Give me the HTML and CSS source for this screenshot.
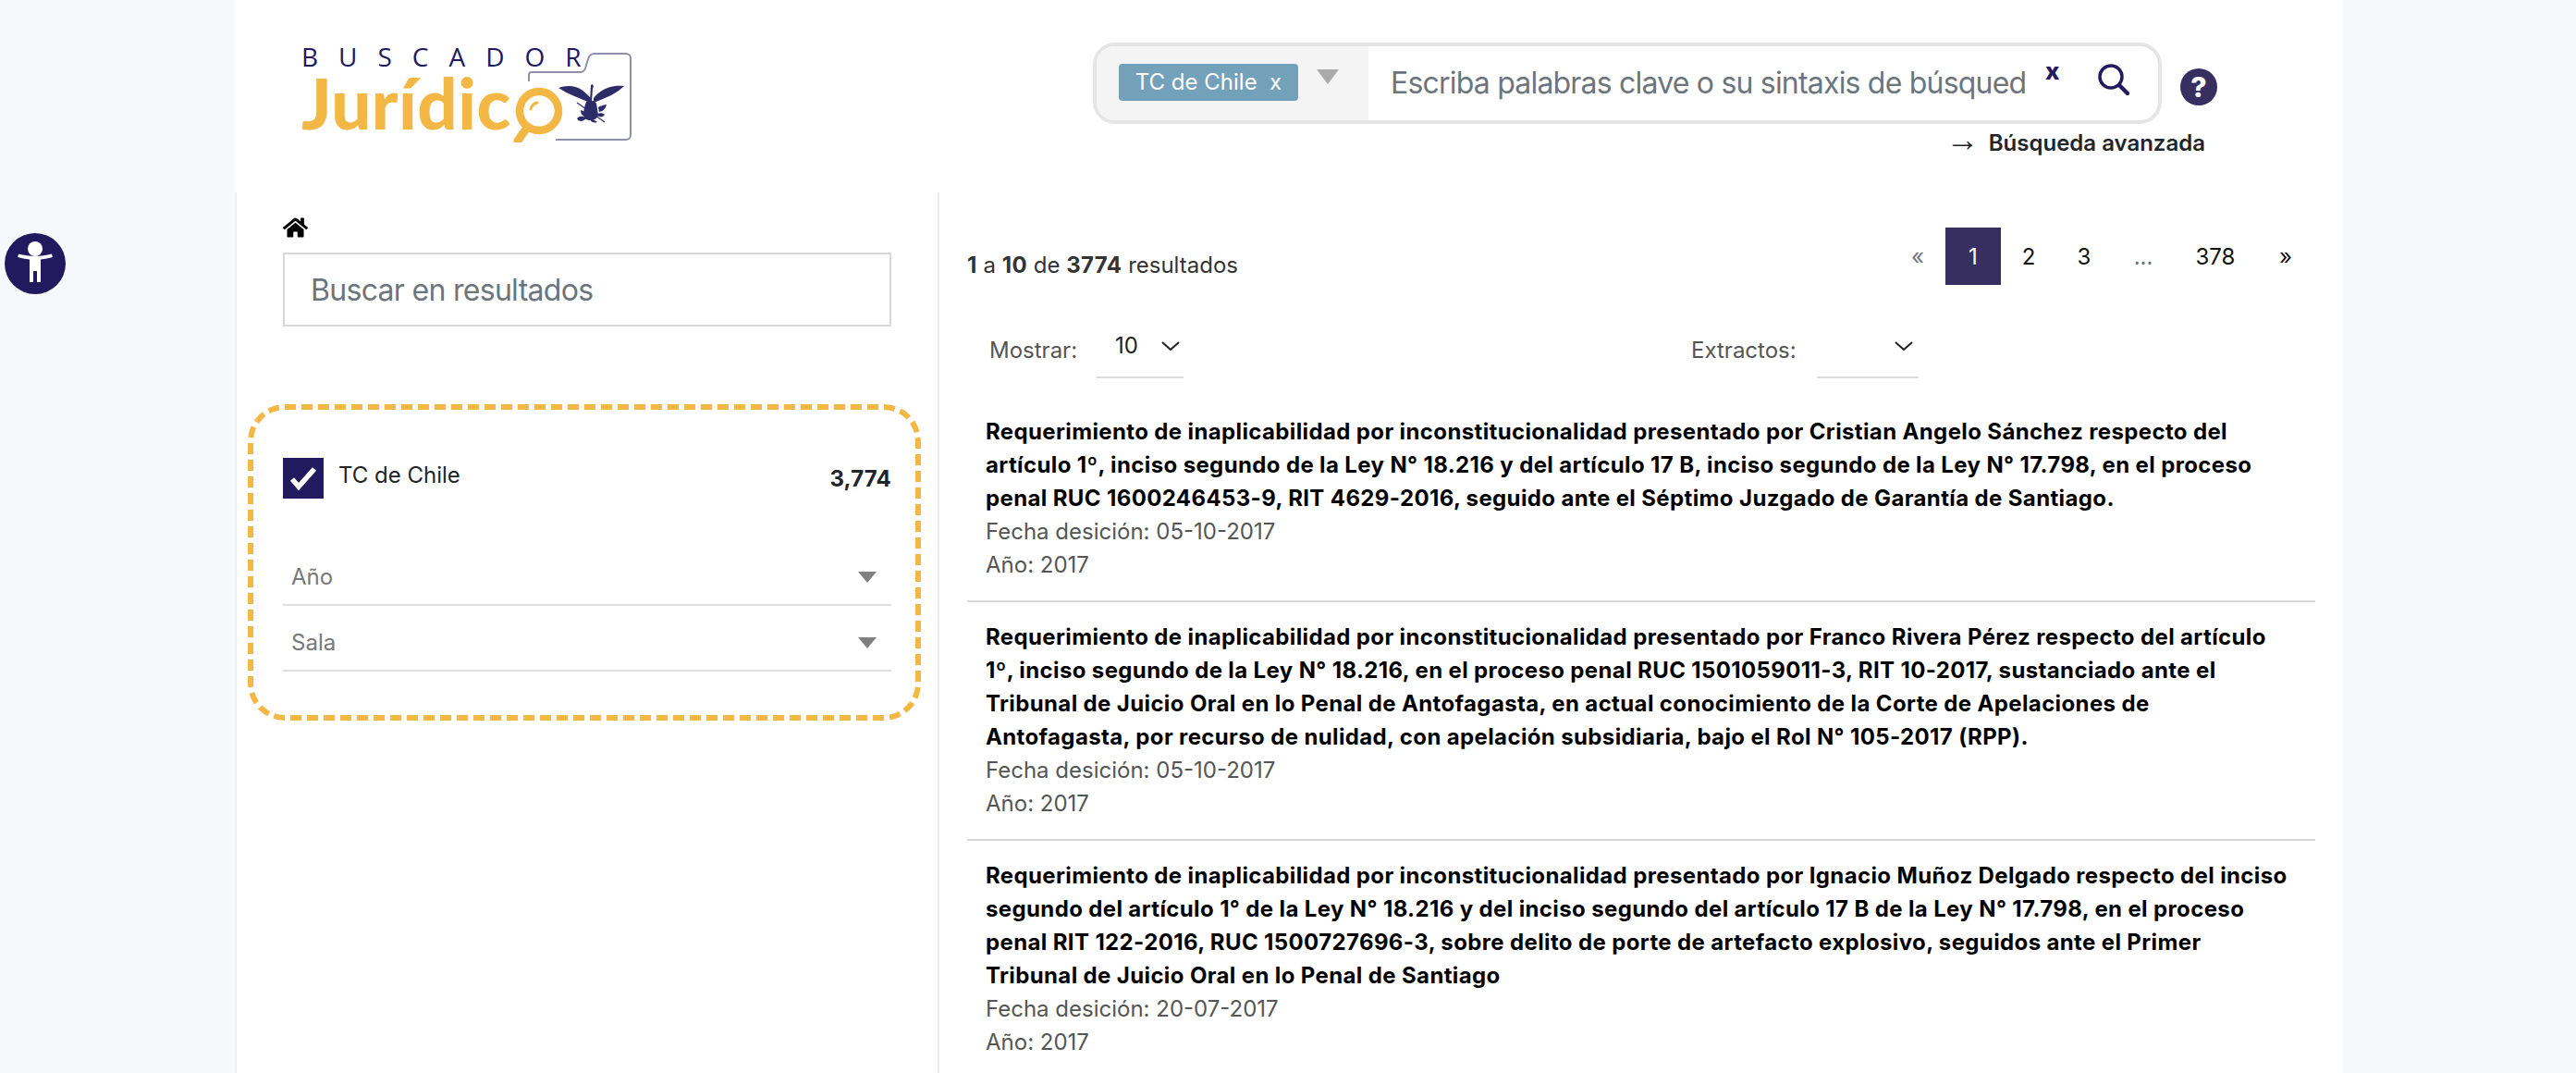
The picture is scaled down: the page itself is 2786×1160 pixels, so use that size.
FILE: index.html
```html
<!DOCTYPE html>
<html lang="es">
<head>
<meta charset="utf-8">
<title>Buscador Jurídico</title>
<link rel="stylesheet" href="styles.css">
</head>
<body>
<button class="a11y" aria-label="Accesibilidad">
  <svg viewBox="0 0 66 66" width="66" height="66"><circle cx="33" cy="33" r="33" fill="#221a5f"/><circle cx="33" cy="17" r="8" fill="#fff"/><path d="M15 22.500c6 1.500 12 2.500 18 2.500s12-1 18-2.500l.8 3.500c-4 1.200-8 2-12.800 2.500V53h-4V41h-4v12h-4V28.500c-4.800-.5-8.800-1.300-12.800-2.500z" fill="#fff"/></svg>
</button>
<div class="page">
  <header class="header">
    <a class="logo">
      <span class="logo-top">BUSCADOR</span>
      <span class="logo-main">Jurídic</span>
      <svg class="logo-art" viewBox="0 0 362 104" width="362" height="104">
        <path d="M246 38V31a3 3 0 0 1 3-3h52c3 0 5-1 6-4l3-10c1-4 3-6 7-6h34a5 5 0 0 1 5 5v83a5 5 0 0 1-5 5h-76" fill="none" stroke="#8f8fa9" stroke-width="2"/>
        <circle cx="257" cy="70" r="21" fill="#fff" stroke="#f3b745" stroke-width="8.500"/>
        <path d="M244 88l-10 14" stroke="#f3b745" stroke-width="9" stroke-linecap="round"/>
        <path d="M248 68c1-4 3-6 7-7" fill="none" stroke="#f3b745" stroke-width="3" stroke-linecap="round"/>
        <g fill="#2d2b68">
          <path d="M278 45C286 42 296 42 303 47 307 50 310 53 313 56L312 61C306 58 299 56 293 53 288 51 283 48 278 45z"/>
          <path d="M349 43C342 42 332 43 325 48 321 51 318 53 316 56L316 61C323 58 329 56 335 53 340 50 345 47 349 43z"/>
          <path d="M313 42l2-1 1 3-1 1-1 15h-2z"/>
          <path d="M308 60C312 58 317 58 319 62L321 74C320 80 312 82 306 78 304 72 306 66 308 60z"/>
          <path d="M298 78C302 74 306 76 308 78 304 82 300 82 298 78z"/>
          <path d="M302 69c4 1 6 3 6 7-4 0-6-3-6-7z"/>
          <path d="M321 66c3-2 5-2 9-3-1 4-3 7-8 8z"/>
          <path d="M320 73c3-1 6-1 8 1-2 3-5 3-8 1z"/>
          <path d="M312 79c3 0 6 1 8 3-3 1-6 1-8-3z"/>
        </g>
        <path d="M298 61L328 82" stroke="#2d2b68" stroke-width="1.200"/>
      </svg>
    </a>
    <div class="search-col">
      <div class="search-row">
        <div class="search-box">
          <div class="search-filter">
            <span class="tag">TC de Chile&nbsp; x</span>
            <span class="tri tri-light"></span>
          </div>
          <div class="search-input">Escriba palabras clave o su sintaxis de búsqueda</div>
          <span class="search-clear">x</span>
          <svg class="search-icon" viewBox="0 0 34 34" width="34" height="34"><circle cx="14" cy="14" r="12" fill="none" stroke="#221a5f" stroke-width="3.500"/><path d="M23 23l9 9" stroke="#221a5f" stroke-width="4.500" stroke-linecap="round"/></svg>
        </div>
        <span class="help">?</span>
      </div>
      <a class="advanced"><span class="arrow">→</span>Búsqueda avanzada</a>
    </div>
  </header>
  <div class="content">
    <aside class="sidebar">
      <svg class="home" viewBox="0 0 576 512" width="27" height="24"><path d="M280.370 148.260L96 300.110V464a16 16 0 0 0 16 16l112.060-.29a16 16 0 0 0 15.920-16V368a16 16 0 0 1 16-16h64a16 16 0 0 1 16 16v95.640a16 16 0 0 0 16 16.050L464 480a16 16 0 0 0 16-16V300L295.670 148.260a12.190 12.190 0 0 0-15.300 0zM571.600 251.470L488 182.560V44.050a12 12 0 0 0-12-12h-56a12 12 0 0 0-12 12v72.610L318.470 43a48 48 0 0 0-61 0L4.340 251.470a12 12 0 0 0-1.600 16.900l25.500 31A12 12 0 0 0 45.150 301l235.220-193.740a12.190 12.190 0 0 1 15.300 0L530.900 301a12 12 0 0 0 16.900-1.600l25.500-31a12 12 0 0 0-1.700-16.930z"/></svg>
      <div class="side-search">Buscar en resultados</div>
      <div class="filters">
        <div class="filter-check">
          <span class="checkbox"><svg viewBox="0 0 44 44" width="44" height="44"><path d="M10 23l7 8 17-19" fill="none" stroke="#fff" stroke-width="5.500"/></svg></span>
          <span class="filter-label">TC de Chile</span>
          <strong class="filter-count">3,774</strong>
        </div>
        <div class="filter-select"><span>Año</span><span class="tri tri-dark"></span></div>
        <div class="filter-select"><span>Sala</span><span class="tri tri-dark"></span></div>
      </div>
    </aside>
    <main class="main">
      <div class="top-row">
        <div class="count"><b>1</b> a <b>10</b> de <b>3774</b> resultados</div>
        <nav class="pager">
          <span class="pg pg-prev">«</span>
          <span class="pg active">1</span>
          <span class="pg">2</span>
          <span class="pg">3</span>
          <span class="pg pg-dots">...</span>
          <span class="pg pg-wide">378</span>
          <span class="pg pg-next">»</span>
        </nav>
      </div>
      <div class="controls">
        <div class="control control-show">
          <span class="control-label">Mostrar:</span>
          <span class="select select-show">10<svg class="chev" viewBox="0 0 20 10" width="20" height="10"><path d="M1 1l9 8 9-8" fill="none" stroke="#222" stroke-width="2"/></svg></span>
        </div>
        <div class="control control-ext">
          <span class="control-label">Extractos:</span>
          <span class="select select-ext"><svg class="chev" viewBox="0 0 20 10" width="20" height="10"><path d="M1 1l9 8 9-8" fill="none" stroke="#222" stroke-width="2"/></svg></span>
        </div>
      </div>
      <article class="result">
        <h2>Requerimiento de inaplicabilidad por inconstitucionalidad presentado por Cristian Angelo Sánchez respecto del artículo 1º, inciso segundo de la Ley N° 18.216 y del artículo 17 B, inciso segundo de la Ley N° 17.798, en el proceso penal RUC 1600246453-9, RIT 4629-2016, seguido ante el Séptimo Juzgado de Garantía de Santiago.</h2>
        <p>Fecha desición: 05-10-2017</p>
        <p>Año: 2017</p>
      </article>
      <article class="result">
        <h2>Requerimiento de inaplicabilidad por inconstitucionalidad presentado por Franco Rivera Pérez respecto del artículo 1º, inciso segundo de la Ley N° 18.216, en el proceso penal RUC 1501059011-3, RIT 10-2017, sustanciado ante el Tribunal de Juicio Oral en lo Penal de Antofagasta, en actual conocimiento de la Corte de Apelaciones de Antofagasta, por recurso de nulidad, con apelación subsidiaria, bajo el Rol N° 105-2017 (RPP).</h2>
        <p>Fecha desición: 05-10-2017</p>
        <p>Año: 2017</p>
      </article>
      <article class="result">
        <h2>Requerimiento de inaplicabilidad por inconstitucionalidad presentado por Ignacio Muñoz Delgado respecto del inciso segundo del artículo 1° de la Ley N° 18.216 y del inciso segundo del artículo 17 B de la Ley N° 17.798, en el proceso penal RIT 122-2016, RUC 1500727696-3, sobre delito de porte de artefacto explosivo, seguidos ante el Primer Tribunal de Juicio Oral en lo Penal de Santiago</h2>
        <p>Fecha desición: 20-07-2017</p>
        <p>Año: 2017</p>
      </article>
    </main>
  </div>
</div>
</body>
</html>
```
FILE: styles.css
```css
* { box-sizing: border-box; }
html, body { margin: 0; height: 100%; }
body {
  background: #f7f8fc;
  font-family: Inter, "Liberation Sans", sans-serif;
  font-size: 24px;
  line-height: 36px;
  color: #212529;
  overflow: hidden;
}
.a11y {
  position: fixed;
  left: 5px;
  top: 252px;
  width: 66px;
  height: 66px;
  padding: 0;
  border: 0;
  background: none;
  line-height: 0;
}
.page {
  width: 2280px;
  min-height: 1160px;
  margin-left: 254px;
  background: #fff;
}
.header {
  display: flex;
  height: 208px;
  padding-left: 72px;
}
.logo {
  position: relative;
  display: flex;
  flex-direction: column;
  width: 362px;
  height: 156px;
  margin-top: 47px;
  flex: none;
}
.logo-top {
  font-family: "Open Sans", sans-serif;
  font-size: 28px;
  line-height: 28px;
  letter-spacing: 22px;
  color: #221a5f;
}
.logo-main {
  font-family: Lato, sans-serif;
  font-weight: 900;
  font-size: 76px;
  line-height: 72px;
  letter-spacing: 0.5px;
  color: #f3b745;
}
.logo-art {
  position: absolute;
  left: 0;
  top: 3px;
}
.search-col {
  display: flex;
  flex-direction: column;
  margin-left: 494px;
  margin-top: 46px;
}
.search-row {
  display: flex;
  align-items: center;
  gap: 20px;
}
.search-box {
  display: flex;
  align-items: center;
  width: 1156px;
  height: 88px;
  border: 4px solid #e5e5e5;
  border-radius: 24px;
  overflow: hidden;
  background: #fff;
}
.search-filter {
  display: flex;
  gap: 20px;
  width: 294px;
  height: 100%;
  padding: 19px 0 0 24px;
  background: #f4f4f4;
  flex: none;
}
.tag {
  display: block;
  height: 40px;
  width: 194px;
  text-align: center;
  line-height: 40px;
  background: #74a1ba;
  border-radius: 4px;
  color: #fff;
  white-space: nowrap;
}
.tri {
  display: block;
  width: 0;
  height: 0;
  border-style: solid;
  border-color: transparent;
  border-bottom-width: 0;
}
.tri-light {
  margin-top: 6px;
  border-width: 16px 12px 0;
  border-top-color: #aaa;
}
.tri-dark {
  border-width: 12px 10px 0;
  border-top-color: #808080;
}
.search-input {
  width: 688px;
  margin-left: 24px;
  overflow: hidden;
  white-space: nowrap;
  font-size: 32px;
  letter-spacing: -0.8px;
  line-height: 48px;
  color: #6c757d;
  flex: none;
}
.search-clear {
  margin: -26px 0 0 20px;
  font-weight: 800;
  font-size: 26px;
  line-height: 30px;
  color: #221a5f;
  flex: none;
}
.search-icon {
  margin: -8px 0 0 42px;
  flex: none;
}
.help {
  width: 40px;
  height: 40px;
  margin-top: 8px;
  border-radius: 50%;
  background: #372f60;
  color: #fff;
  font-weight: 800;
  font-size: 30px;
  line-height: 40px;
  text-align: center;
}
.advanced {
  align-self: flex-end;
  margin: 3px 13px 0 0;
  font-weight: 600;
  color: #212529;
}
.arrow {
  margin-right: 10px;
  font-family: "Liberation Sans", sans-serif;
  font-size: 36px;
  line-height: 0;
  font-weight: 400;
}
.content {
  display: flex;
  min-height: 952px;
}
.sidebar {
  width: 760px;
  padding: 26px 50px 0;
  border-left: 2px solid #eceef4;
  flex: none;
}
.home {
  display: block;
  margin-bottom: 15px;
}
.side-search {
  height: 80px;
  padding-left: 28px;
  border: 2px solid #d8d8d8;
  font-size: 32px;
  letter-spacing: -0.7px;
  line-height: 78px;
  color: #6c757d;
}
.filters {
  width: 728px;
  height: 342px;
  margin: 84px 0 0 -38px;
  padding: 52px 26px 0 32px;
  border: 6px dashed #f3b745;
  border-radius: 40px;
}
.filter-check {
  display: flex;
  height: 44px;
  margin-bottom: 45px;
}
.checkbox {
  width: 44px;
  height: 44px;
  background: #221a5f;
  line-height: 0;
  flex: none;
}
.filter-label {
  margin-left: 16px;
  line-height: 38px;
}
.filter-count {
  margin-left: auto;
  line-height: 46px;
  letter-spacing: 0.2px;
}
.filter-select {
  display: flex;
  align-items: center;
  justify-content: space-between;
  height: 71px;
  padding: 10px 16px 0 9px;
  border-bottom: 2px solid #dedede;
  color: #777;
}
.main {
  flex: 1;
  padding: 38px 30px 0 0;
  border-left: 2px solid #e9edf2;
}
.top-row {
  display: flex;
  align-items: center;
  justify-content: space-between;
  height: 62px;
}
.count {
  margin: 20px 0 0 30px;
  color: #333;
}
.count b { letter-spacing: 0.37px; }
.pager { display: flex; }
.pg {
  width: 60px;
  height: 62px;
  line-height: 64px;
  text-align: center;
  color: #111;
}
.pg-prev, .pg-dots { color: #6c757d; }
.pg-dots { width: 68px; }
.pg-wide { width: 88px; }
.pg-next { width: 64px; }
.active {
  background: #372f60;
  color: #fff;
}
.controls {
  display: flex;
  height: 121px;
  padding: 32px 0 0 54px;
}
.control { display: flex; }
.control-show { width: 759px; }
.control-label {
  padding-top: 21px;
  color: #555;
}
.select {
  display: flex;
  align-items: flex-start;
  height: 69px;
  border-bottom: 2px solid #ddd;
  padding-top: 16px;
  color: #222;
}
.select-show {
  width: 94px;
  margin-left: 21px;
  padding-left: 20px;
}
.select-ext {
  width: 110px;
  margin-left: 22px;
  justify-content: flex-end;
  padding-right: 6px;
}
.chev { margin: 13px 0 0 0; flex: none; }
.select-show .chev { margin-left: 25px; }
.result {
  margin-left: 30px;
  padding: 20px 18px 20px 20px;
  border-bottom: 2px solid #d9d9d9;
}
.result:last-child { border-bottom: 0; }
.result h2 {
  margin: 0;
  font-size: 24px;
  letter-spacing: 0.37px;
  line-height: 36px;
  font-weight: 700;
  color: #000;
}
.result p {
  margin: 0;
  color: #555;
}
```
